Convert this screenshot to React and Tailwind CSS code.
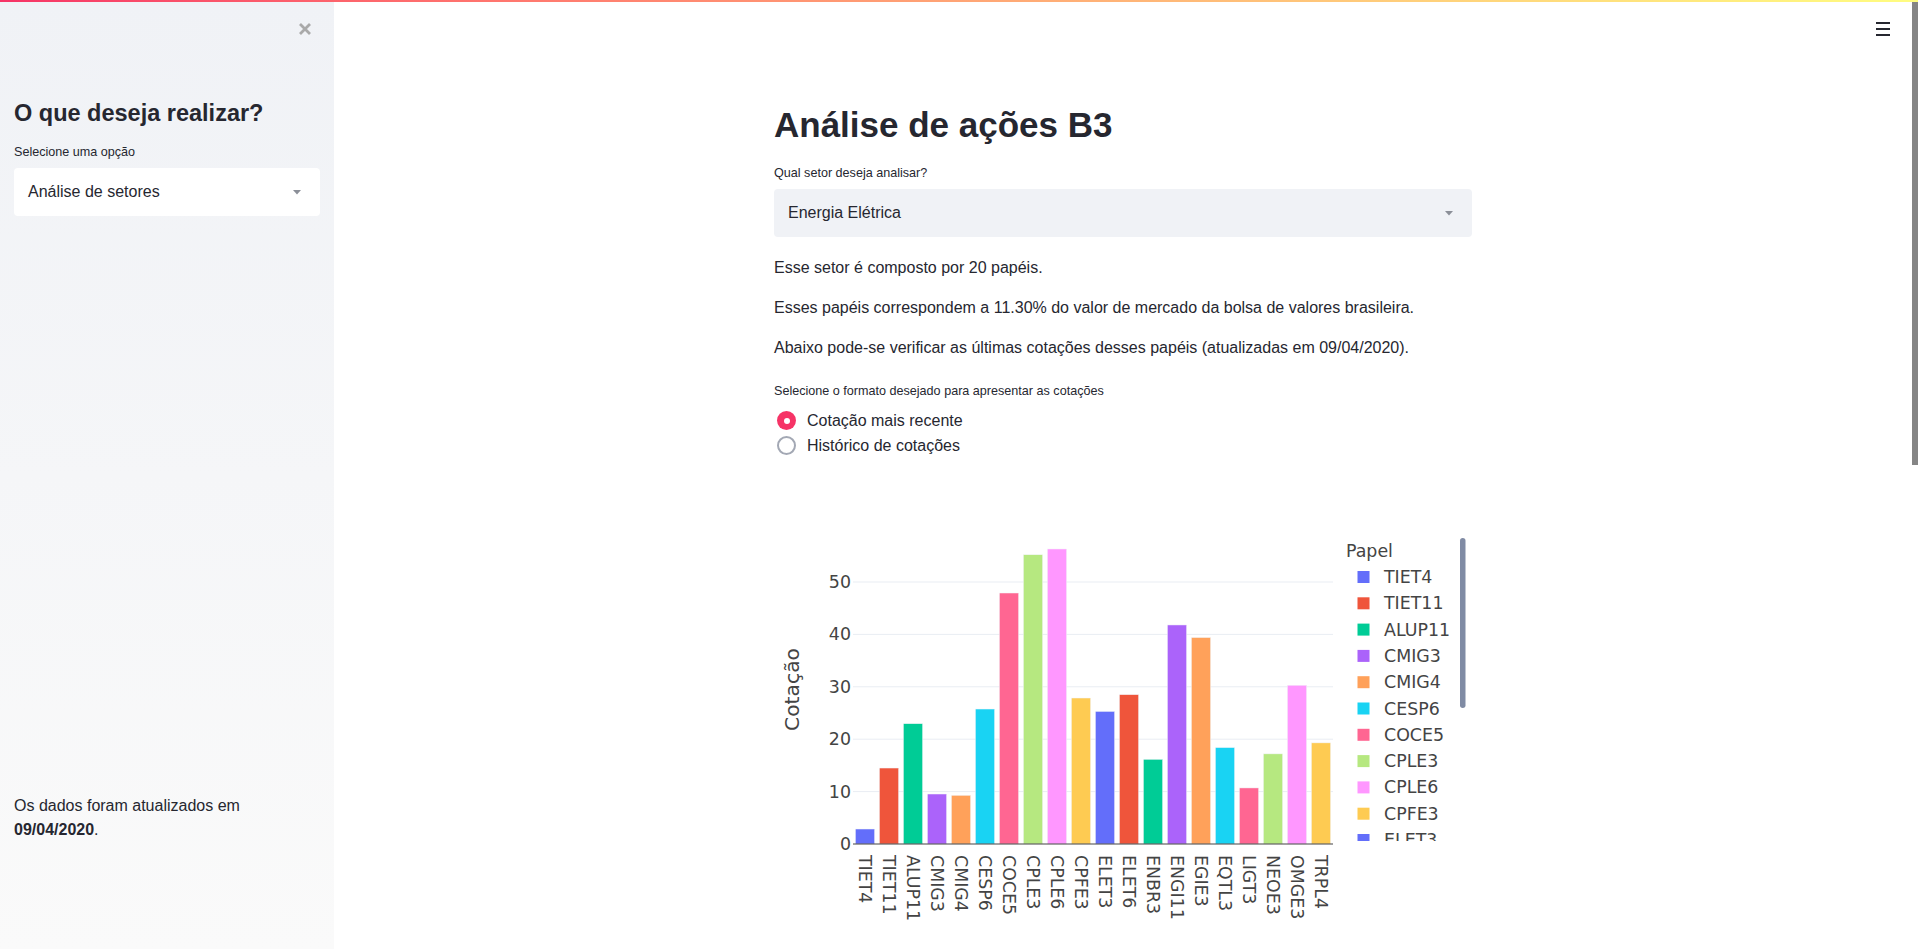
import React from 'react'

const COLORS = ['#636efa', '#ef553b', '#00cc96', '#ab63fa', '#ffa15a', '#19d3f3', '#ff6692', '#b6e880', '#ff97ff', '#fecb52']

const papeis = [
  ['TIET4', 2.86], ['TIET11', 14.5], ['ALUP11', 22.96], ['CMIG3', 9.54], ['CMIG4', 9.29],
  ['CESP6', 25.76], ['COCE5', 47.9], ['CPLE3', 55.2], ['CPLE6', 56.3], ['CPFE3', 27.86],
  ['ELET3', 25.3], ['ELET6', 28.5], ['ENBR3', 16.16], ['ENGI11', 41.8], ['EGIE3', 39.4],
  ['EQTL3', 18.4], ['LIGT3', 10.7], ['NEOE3', 17.2], ['OMGE3', 30.3], ['TRPL4', 19.3],
]

// chart geometry, page coordinates (viewBox matches the page)
const X0 = 853
const Y0 = 844
const STEP = 24
const UNIT = 5.24
const font = 'DejaVu Sans, Verdana, sans-serif'

function Caret() {
  return (
    <svg width="8" height="5" viewBox="0 0 8 5">
      <path d="M0 0 L8 0 L4 4.5 Z" fill="#8b8f98" />
    </svg>
  )
}

function Select({ value, className }) {
  return (
    <div className={`flex h-[48px] items-center justify-between rounded-[4px] pl-[14px] pr-[19px] text-[16px] ${className}`}>
      <span>{value}</span>
      <Caret />
    </div>
  )
}

function Chart() {
  return (
    <svg width="698" height="479" viewBox="774 470 698 479" className="block">
      {[1, 2, 3, 4, 5].map(k => (
        <line key={k} x1={X0} x2={1333} y1={Y0 - k * 10 * UNIT} y2={Y0 - k * 10 * UNIT} stroke="#e9edf3" strokeWidth="1" />
      ))}
      {[0, 1, 2, 3, 4, 5].map(k => (
        <text key={k} x={851} y={Y0 - k * 10 * UNIT} textAnchor="end" dominantBaseline="central" fontSize="17.4" fontFamily={font} fill="#444">{k * 10}</text>
      ))}
      <text transform="translate(792 689.5) rotate(-90)" textAnchor="middle" dominantBaseline="central" fontSize="20.3" fontFamily={font} fill="#444">Cotação</text>
      {papeis.map(([n, v], i) => (
        <rect key={n} x={X0 + i * STEP + 2.4} y={Y0 - v * UNIT} width={19.2} height={v * UNIT} fill={COLORS[i % 10]} stroke="#f2f4f8" strokeWidth="0.5" />
      ))}
      <line x1={X0} x2={1333} y1={Y0} y2={Y0} stroke="#444" strokeWidth="1.2" />
      {papeis.map(([n], i) => (
        <text key={n} transform={`translate(${X0 + i * STEP + 12} 855) rotate(90)`} dominantBaseline="central" fontSize="17.4" fontFamily={font} fill="#444">{n}</text>
      ))}
      <defs>
        <clipPath id="legend-clip">
          <rect x="1340" y="538" width="120" height="303" />
        </clipPath>
      </defs>
      <g clipPath="url(#legend-clip)">
        <text x="1346" y="551" dominantBaseline="central" fontSize="17.4" fontFamily={font} fill="#444">Papel</text>
        {papeis.slice(0, 12).map(([n], i) => (
          <g key={n}>
            <rect x="1357.5" y={577 + i * 26.3 - 6} width="12" height="12" fill={COLORS[i % 10]} />
            <text x="1384" y={577 + i * 26.3} dominantBaseline="central" fontSize="17.4" fontFamily={font} fill="#444">{n}</text>
          </g>
        ))}
      </g>
      <rect x="1460" y="538" width="5.5" height="170" rx="2.75" fill="#808ba4" />
    </svg>
  )
}

function Radio({ checked, label }) {
  return (
    <label className="flex h-[25px] items-center">
      {checked ? (
        <span className="ml-[3px] flex h-[19px] w-[19px] items-center justify-center rounded-full bg-[#f63366]">
          <span className="h-[6px] w-[6px] rounded-full bg-white" />
        </span>
      ) : (
        <span className="ml-[3px] h-[19px] w-[19px] rounded-full border-2 border-[#a3a8b4] bg-white" />
      )}
      <span className="ml-[11px] text-[16px]">{label}</span>
    </label>
  )
}

export default function App() {
  return (
    <div className="relative flex h-[949px] w-full overflow-hidden bg-white font-['Liberation_Sans',Arial,sans-serif] text-[#262730]">
      <div className="absolute left-0 right-0 top-0 z-10 h-[2px] bg-linear-to-r from-[#f63366] to-[#fffd80]" />

      <aside className="flex w-[334px] shrink-0 flex-col bg-linear-to-b from-[#f0f2f6] to-[#fafafa] px-[14px]">
        <div className="flex justify-end pt-[22px]">
          <svg width="14" height="14" viewBox="0 0 14 14" className="mr-[8px]">
            <path d="M2 2 L12 12 M12 2 L2 12" stroke="#a9a9a9" strokeWidth="2.8" />
          </svg>
        </div>
        <h2 className="mt-[63px] text-[23.5px] font-bold leading-[28px]">O que deseja realizar?</h2>
        <div className="mt-[17px] text-[12.6px] leading-[16px]">Selecione uma opção</div>
        <Select value="Análise de setores" className="mt-[8px] bg-white" />
        <div className="mt-auto pb-[107px] text-[16px] leading-[24px]">
          Os dados foram atualizados em
          <br />
          <b>09/04/2020</b>.
        </div>
      </aside>

      <main className="relative flex-1">
        <div className="absolute right-[28px] top-[22px] flex w-[14px] flex-col gap-[4.5px]">
          <span className="h-[1.6px] bg-[#262730]" />
          <span className="h-[1.6px] bg-[#262730]" />
          <span className="h-[1.6px] bg-[#262730]" />
        </div>

        <div className="ml-[440px] w-[698px] pt-[104px]">
          <h1 className="text-[35px] font-bold leading-[42px]">Análise de ações B3</h1>
          <div className="mt-[19px] text-[12.6px] leading-[16px]">Qual setor deseja analisar?</div>
          <Select value="Energia Elétrica" className="mt-[8px] bg-[#f0f2f6]" />
          <div className="mt-[19px] text-[16px] leading-[24px]">
            <p>Esse setor é composto por 20 papéis.</p>
            <p className="mt-[16px]">Esses papéis correspondem a 11.30% do valor de mercado da bolsa de valores brasileira.</p>
            <p className="mt-[16px]">Abaixo pode-se verificar as últimas cotações desses papéis (atualizadas em 09/04/2020).</p>
          </div>
          <div className="mt-[23px] text-[12.6px] leading-[16px]">Selecione o formato desejado para apresentar as cotações</div>
          <div className="mt-[9px] flex flex-col">
            <Radio checked label="Cotação mais recente" />
            <Radio label="Histórico de cotações" />
          </div>
          <div className="mt-[12px]">
            <Chart />
          </div>
        </div>
      </main>

      <div className="absolute right-0 top-[2px] h-[463px] w-[6px] bg-[#858585]" />
    </div>
  )
}
